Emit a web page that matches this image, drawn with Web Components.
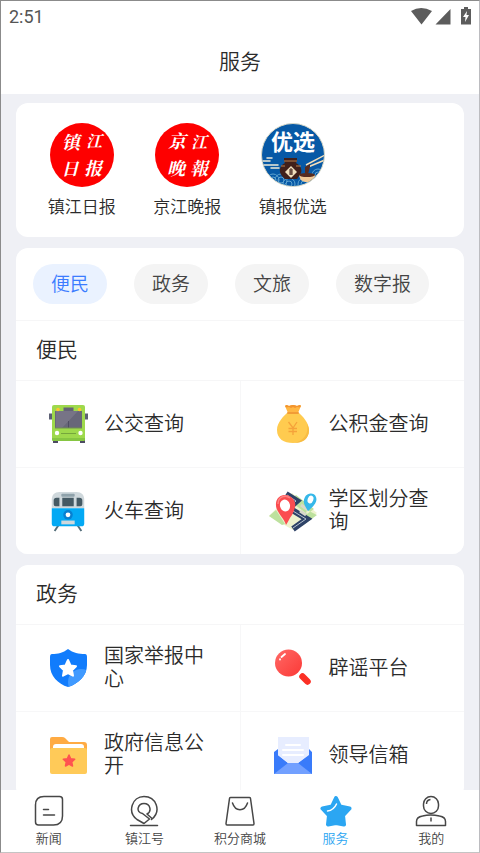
<!DOCTYPE html>
<html lang="zh-CN">
<head>
<meta charset="utf-8">
<meta name="viewport" content="width=device-width, initial-scale=1">
<title>服务</title>
<style>
  body {
    margin: 0;
    color: #2b2b2b;
    font-family: Roboto, "Noto Sans CJK SC", sans-serif;
  }
</style>
</head>
<body>
<service-app>
  <status-bar slot="top" time="2:51"></status-bar>
  <page-title slot="top">服务</page-title>

  <app-card>
    <paper-list>
      <paper-link icon="zjrb">镇江日报</paper-link>
      <paper-link icon="jjwb">京江晚报</paper-link>
      <paper-link icon="zbyx">镇报优选</paper-link>
    </paper-list>
  </app-card>

  <app-card>
    <pill-tabs>
      <pill-tab active>便民</pill-tab>
      <pill-tab>政务</pill-tab>
      <pill-tab>文旅</pill-tab>
      <pill-tab>数字报</pill-tab>
    </pill-tabs>
    <service-group heading="便民">
      <service-item icon="bus">公交查询</service-item>
      <service-item icon="fund">公积金查询</service-item>
      <service-item icon="train">火车查询</service-item>
      <service-item icon="map">学区划分查询</service-item>
    </service-group>
  </app-card>

  <app-card>
    <service-group heading="政务">
      <service-item icon="shield">国家举报中心</service-item>
      <service-item icon="magnifier">辟谣平台</service-item>
      <service-item icon="folder">政府信息公开</service-item>
      <service-item icon="mail">领导信箱</service-item>
    </service-group>
  </app-card>

  <nav-bar slot="bottom">
    <nav-item icon="news">新闻</nav-item>
    <nav-item icon="account">镇江号</nav-item>
    <nav-item icon="shop">积分商城</nav-item>
    <nav-item icon="service" active>服务</nav-item>
    <nav-item icon="me">我的</nav-item>
  </nav-bar>
</service-app>

<script>
const icons = {
  zjrb: `<svg viewBox="0 0 64 64"><circle cx="32" cy="32" r="32" fill="#fe0000"/>
    <g fill="#fff" font-family="Noto Serif CJK SC, Noto Sans CJK SC, sans-serif" font-weight="700" font-style="italic" text-anchor="middle">
    <text x="21" y="26" font-size="18">镇</text><text x="44" y="24" font-size="16">江</text>
    <text x="20" y="52" font-size="17">日</text><text x="43" y="52" font-size="18">报</text></g></svg>`,
  jjwb: `<svg viewBox="0 0 64 64"><circle cx="32" cy="32" r="32" fill="#fe0000"/>
    <g fill="#fff" font-family="Noto Serif CJK SC, Noto Sans CJK SC, sans-serif" font-weight="700" font-style="italic" text-anchor="middle">
    <text x="22" y="25" font-size="18">京</text><text x="44" y="25" font-size="16">江</text>
    <text x="21" y="52" font-size="18">晚</text><text x="44" y="52" font-size="18">報</text></g></svg>`,
  zbyx: `<svg viewBox="0 0 64 64">
    <defs><clipPath id="c"><circle cx="32" cy="32" r="31"/></clipPath></defs>
    <circle cx="32" cy="32" r="31.5" fill="#0759a6" stroke="#d8d8c8"/>
    <g clip-path="url(#c)">
      <g fill="none" stroke="#5fa3cf" stroke-width="1">
        <circle cx="12" cy="57" r="3"/><circle cx="12" cy="57" r="6"/><circle cx="20" cy="57" r="3"/><circle cx="20" cy="57" r="6"/>
        <circle cx="28" cy="61" r="3"/><circle cx="28" cy="61" r="6"/><circle cx="57" cy="52" r="3"/><circle cx="57" cy="52" r="6"/>
        <circle cx="43" cy="61" r="3"/><circle cx="43" cy="61" r="6"/>
      </g>
      <path d="M0 38H9M3 42H17M6 35H11M10 45H18" stroke="#f0ead9" stroke-width="1.500" stroke-linecap="round"/>
      <path d="M23 35h13v3l-1 2c6 3 7 9 3 13l-2 3H24l-3-3c-4-5-2-11 3-13l-1-2z" fill="#41201a"/>
      <path d="M23 38h13M20 43h4m11 0h5" stroke="#b98150" stroke-width="1"/>
      <path d="M30 43l6 6-6 6-6-6z" fill="#f1dfbd"/>
      <path d="M28 47h4M30 45v7M28 51h4M28 49h4" stroke="#41201a" stroke-width="1"/>
      <path d="M38 52h16c0 5-3 7-8 7s-7-2-8-7z" fill="#f0c997"/>
      <ellipse cx="46" cy="52" rx="8" ry="2" fill="#572c20"/>
      <path d="M45 42L64 32M47 44L64 37" stroke="#f5dfb9" stroke-width="1.500" fill="none"/>
      <path d="M44 51v-7l5-3v3l-2 7z" fill="#572c20"/>
    </g>
    <text x="32" y="27" fill="#fff" font-family="Noto Sans CJK SC, sans-serif" font-weight="700" font-size="22" text-anchor="middle">优选</text></svg>`,
  bus: `<svg viewBox="0 0 40 40">
    <path d="M1 9.500h4v6H1zM36 9.500h4v6h-4z" fill="#5c6074"/><path d="M5 35h5v4H5zM32 35h5v4h-5z" fill="#4c4b62"/>
    <rect x="4" y="1" width="33" height="36" rx="2" fill="#9ed94c"/><path d="M4 34h33v1.500a1.500 1.500 0 0 1-1.500 1.500h-30A1.500 1.500 0 0 1 4 35.500z" fill="#86c642"/>
    <rect x="15.500" y="3.500" width="10" height="4" fill="#646376"/><path d="M7 7h27v17H7z" fill="#686779"/>
    <path d="M8 7h22L14 24H8z" fill="#7d7b8b" opacity=".7"/><path d="M20.500 17v7" stroke="#4f4c62"/><path d="M7 24h27" stroke="#718e53"/>
    <circle cx="10" cy="5.500" r="1.800" fill="#ffc52f"/><circle cx="31.500" cy="5.500" r="1.800" fill="#ffc52f"/>
    <circle cx="9" cy="29" r="2.200" fill="#fff"/><circle cx="32.500" cy="29" r="2.200" fill="#fff"/><path d="M13 29.500h15" stroke="#75a63c"/></svg>`,
  fund: `<svg viewBox="0 0 40 40">
    <path d="M14 9c-3 3-10 9-10 17 0 9 7 13 16 13s16-4 16-13c0-8-7-14-10-17z" fill="#ffcb4f"/>
    <path d="M34 20c2 9-3 17-13 19 9 0 15-4 15-13 0-2-1-4-2-6z" fill="#f8bc43"/>
    <path d="M12 2c2-2 3 0 4 0 2-1 3-1 4-1s2 0 4 1c1 0 3-2 4 0l-3 7H15z" fill="#ffb743"/>
    <path d="M12 2c2-2 3 0 4 0 2-1 3-1 4-1s2 0 4 1c1 0 3-2 4 0l-1 1.500-3-.500-2 1-2-1-2 1-2-1-3 .500z" fill="#f3942f"/>
    <rect x="14" y="8" width="12" height="2" rx="1" fill="#f29c36"/>
    <path d="M15.500 18l4.500 6 4-6M20 24v7M15.500 24.500h8.500M15.500 27.500h8.500" stroke="#f5a23a" stroke-width="1.300" fill="none"/></svg>`,
  train: `<svg viewBox="0 0 40 44">
    <path d="M10 37l-4 6M30 37l4 6" stroke="#546e7a" stroke-width="2"/>
    <path d="M3 19v-9c0-5 3-8 8-8h18c5 0 8 3 8 8v9z" fill="#cfd8dc"/>
    <path d="M3 19h34v16c0 2-1 3-3 3H6c-2 0-3-1-3-3z" fill="#03a9f4"/>
    <rect x="13" y="4" width="14" height="3" rx="1" fill="#8fa2ab"/>
    <path d="M5 11q0-3 3-3h3v9H7q-2 0-2-2zM14 8h12v9H14zM29 8h3q3 0 3 3v4q0 2-2 2h-4z" fill="#455a64"/>
    <circle cx="20" cy="26" r="5" fill="#087fd0"/><circle cx="20" cy="26" r="2.500" fill="#fff"/><rect x="13" y="32" width="14" height="4" fill="#cfd8dc"/></svg>`,
  map: `<svg viewBox="0 0 48 40">
    <path d="M0 25l23-23 25 20-24 17z" fill="#eef3ce"/><path d="M0 25l7-6 9 14-3 1zM27 4l18 14-7 5-17-13zM33 35l15-11-10-5z" fill="#bde19e"/>
    <path d="M17 3l11 7-8 7 18 11-14 10" fill="none" stroke="#2e4267" stroke-width="6"/>
    <path d="M18 4l9 6-8 7 18 11-13 9" fill="none" stroke="#b9c5d0" stroke-width="1"/>
    <path d="M31 20l6 4M32 14l7 5" stroke="#d8d8cb" stroke-width="3"/>
    <path d="M39 20c-3-5-6-9-3-14 2-4 9-5 11 0 2 5-3 10-8 14z" fill="#36b8e9"/><ellipse cx="41.500" cy="8.500" rx="2.800" ry="4" transform="rotate(20 41.500 8.500)" fill="#fff"/>
    <path d="M17 34C15 26 6 21 7 12 8 4 17 2 22 6c7 5 4 12 1 18-3 4-4 7-6 10z" fill="#fb4d50"/>
    <path d="M9 13c0-7 7-10 12-6" stroke="#ff8182" stroke-width="1.500" fill="none"/><ellipse cx="16" cy="14.500" rx="5" ry="6" transform="rotate(-15 16 14.500)" fill="#fff"/></svg>`,
  shield: `<svg viewBox="0 0 40 40">
    <defs><clipPath id="s"><path d="M20 1c5 4 11 5 17 5q2 0 2 3v8c0 11-9 19-19 22C10 36 2 28 2 17V9q0-3 2-3c6 0 11-1 16-5z"/></clipPath></defs>
    <g clip-path="url(#s)"><path d="M0 0h40v40H0z" fill="#117cfc"/><circle cx="33" cy="34" r="13" fill="#409aff"/></g>
    <path d="M20 12l2.500 5.500 5.500.700-4 4 1 5.500-5-2.700-5 2.700 1-5.500-4-4 5.500-.700z" fill="#fff" stroke="#fff" stroke-width="2" stroke-linejoin="round"/></svg>`,
  magnifier: `<svg viewBox="0 0 40 40">
    <defs><linearGradient id="m" x2="1" y2="1"><stop stop-color="#ff6966"/><stop offset="1" stop-color="#fb3936"/></linearGradient></defs>
    <circle cx="15.500" cy="15" r="13.500" fill="url(#m)"/><path d="M29.500 28.500l5 5" stroke="#fb3026" stroke-width="6.500" stroke-linecap="round"/>
    <path d="M8.500 9l3.500-3M7 11.500v-.300" stroke="#fff" stroke-width="1.800" stroke-linecap="round"/></svg>`,
  folder: `<svg viewBox="0 0 40 40">
    <path d="M2 4q0-2 2-2h10q2 0 3 1l4 4h15q3 0 3 3v10H2z" fill="#ffab43"/>
    <path d="M5 18v-6q0-3 3-3h25q3 0 3 3v6z" fill="#fff"/>
    <path d="M4 13h33q2 0 2 2v22q0 2-2 2H4q-2 0-2-2V15q0-2 2-2z" fill="#ffca58"/>
    <path d="M21 20l1.700 3.700 4 .500-3 2.800.800 4-3.500-2-3.500 2 .800-4-3-2.800 4-.500z" fill="#ff5350" stroke="#ff5350" stroke-width="1.500" stroke-linejoin="round"/></svg>`,
  mail: `<svg viewBox="0 0 40 40">
    <path d="M1 17l4-3v14h31V14l3 3v22H1z" fill="#397bfa"/><path d="M5 2h31v22L24 29h-7L5 21z" fill="#e7edff"/>
    <path d="M1 17l14 11h10l14-11v22H1z" fill="#397bfa"/><path d="M1 39l14-11h10l14 11z" fill="#72a0ff"/>
    <path d="M5 20l10 8h10l11-8v-3H5z" fill="#e7edff"/>
    <path d="M13 10h14M10 15h20M10 20h20" stroke="#fff" stroke-width="2" stroke-linecap="round"/></svg>`,
  news: `<svg viewBox="0 0 32 32" fill="none" stroke="#474747" stroke-width="1.500" stroke-linecap="round">
    <path d="M11 1.500h15.500q3 0 3 3V21q0 9-9 9H5.500q-3 0-3-3V10q0-8.500 8.500-8.500z"/><path d="M10.500 14.500h5M10.500 20h11"/></svg>`,
  account: `<svg viewBox="0 0 32 32" fill="none" stroke="#474747" stroke-width="1.500" stroke-linejoin="round" stroke-linecap="round">
    <path d="M23.500 24.500C34 16 28 1.500 16 1.500S-1 17 9 24.500l7 4 5.500-4.500-7-5.500C7 17 10 8.500 16 8.500c6.500 0 8 8 3 10.500l4.500 4"/><path d="M2.500 30.500h27"/></svg>`,
  shop: `<svg viewBox="0 0 32 32" fill="none" stroke="#474747" stroke-width="1.500" stroke-linecap="round" stroke-linejoin="round">
    <path d="M6.500 2.500h19q1 0 1 1l3.500 25q0 1.500-1 1.500H3q-1 0-1-1.500l3.500-25q0-1 1-1z"/><path d="M8.500 8c3 9 12 9 15 0"/></svg>`,
  service: `<svg viewBox="0 0 32 32">
    <path d="M16 3l4 8.500 9.500 2-6.500 7 1 9-8-1.500-8 1.500 1-9-6.500-7 9.500-2z" fill="#2ba6f2" stroke="#2ba6f2" stroke-width="4" stroke-linejoin="round"/>
    <path d="M7.500 16c4-.500 7-2.500 9-7" stroke="#fff" stroke-width="1.500" stroke-linecap="round" fill="none"/></svg>`,
  me: `<svg viewBox="0 0 32 32" fill="none" stroke="#474747" stroke-width="1.500" stroke-linejoin="round">
    <rect x="8.500" y="1.500" width="15" height="17" rx="7.500"/><path d="M11.500 9q0-4 4-4.500M1.500 30.500v-4q0-4.500 6-5.500 8-2 17 0 6 1 6 5.500v4zM16 22.500v4"/></svg>`
};

function define(name, html, setup) {
  const tmpl = document.createElement("template");
  tmpl.innerHTML = html;

  customElements.define(name, class extends HTMLElement {
    constructor() {
      super();
      this.attachShadow({ mode: "open" });
      this.shadowRoot.appendChild(tmpl.content.cloneNode(true));
    }

    connectedCallback() {
      if (setup) setup(this, this.shadowRoot);
    }
  });
}

function addIcon(el, root) {
  root.querySelector(".icon").innerHTML = icons[el.getAttribute("icon")];
}

define("service-app", `
  <style>
    :host {
      display: flex;
      flex-direction: column;
      box-sizing: border-box;
      height: 100vh;
      border: 1px solid #8b8b8b;
      border-right-color: #bcbcc0;
      border-bottom-color: #c4c4c4;
      background: #eff0f5;
    }
    main {
      display: flex;
      flex: 1;
      flex-direction: column;
      gap: 11px;
      min-height: 0;
      padding: 9px 15px 10px;
      overflow-y: auto;
      scrollbar-width: none;
    }
  </style>
  <header><slot name="top"></slot></header>
  <main><slot></slot></main>
  <slot name="bottom"></slot>
`);

define("status-bar", `
  <style>
    :host {
      display: flex;
      align-items: center;
      justify-content: space-between;
      height: 30px;
      padding: 0 8px;
      background: #fff;
      color: #555;
      font-size: 18px;
    }
    svg { display: block; width: 60px; height: 18px; }
  </style>
  <span></span>
  <svg viewBox="0 0 60 18" fill="#5c5c5c" aria-hidden="true">
    <path d="M0 4Q10-2 21 4L10.500 17.500zM24.500 17.500L39.500 2v15.500zM50 2h3V0h4v2h3v15.500H50z"/>
    <path d="M56 4l-4 6h2.500L54 15l4-7h-2.500z" fill="#fff"/>
  </svg>
`, (el, root) => {
  root.querySelector("span").textContent = el.getAttribute("time");
});

define("page-title", `
  <style>
    :host { display: block; background: #fff; }
    h1 {
      margin: 0;
      font-size: 21px;
      font-weight: 350;
      line-height: 63px;
      text-align: center;
    }
  </style>
  <h1><slot></slot></h1>
`);

define("app-card", `
  <style>
    :host {
      display: block;
      flex: none;
      border-radius: 12px;
      background: #fff;
      overflow: hidden;
    }
  </style>
  <slot></slot>
`);

define("paper-list", `
  <style>
    :host {
      display: grid;
      grid-template-columns: repeat(4, 1fr);
      padding: 20px 13px 18px;
    }
  </style>
  <slot></slot>
`);

define("paper-link", `
  <style>
    a {
      display: flex;
      flex-direction: column;
      align-items: center;
      gap: 8px;
      color: inherit;
      font-size: 17px;
      font-weight: 350;
      line-height: 24px;
      text-decoration: none;
    }
    svg { display: block; width: 64px; height: 64px; }
  </style>
  <a href="#"><span class="icon"></span><slot></slot></a>
`, addIcon);

define("pill-tabs", `
  <style>
    :host {
      display: flex;
      gap: 27px;
      padding: 16px 17px;
      border-bottom: 1px solid #f6f6f7;
    }
  </style>
  <slot></slot>
`);

define("pill-tab", `
  <style>
    button {
      display: block;
      height: 40px;
      padding: 0 18px 3px;
      border: 0;
      border-radius: 20px;
      background: #f4f4f4;
      color: #444;
      font: inherit;
      font-size: 19px;
      font-weight: 350;
    }
    :host([active]) button { background: #eaf2ff; color: #3b7cff; }
  </style>
  <button type="button"><slot></slot></button>
`);

define("service-group", `
  <style>
    h2 {
      margin: 0;
      padding-left: 20px;
      border-bottom: 1px solid #f6f6f7;
      font-size: 21px;
      font-weight: 350;
      line-height: 59px;
    }
    div {
      display: grid;
      grid-template-columns: 1fr 1fr;
      gap: 1px;
      background: #f7f7f8;
    }
  </style>
  <section>
    <h2></h2>
    <div><slot></slot></div>
  </section>
`, (el, root) => {
  root.querySelector("h2").textContent = el.getAttribute("heading");
});

define("service-item", `
  <style>
    :host { display: block; background: #fff; }
    a {
      display: flex;
      align-items: center;
      gap: 16px;
      height: 86px;
      padding: 0 30px 0 32px;
      color: inherit;
      font-size: 20px;
      font-weight: 350;
      line-height: 23px;
      text-decoration: none;
    }
    .icon { flex: none; width: 40px; }
    svg { display: block; width: 40px; height: 42px; }
    .icon.wide svg { width: 48px; margin: 0 -4px; }
  </style>
  <a href="#"><span class="icon"></span><span><slot></slot></span></a>
`, (el, root) => {
  addIcon(el, root);
  root.querySelector(".icon").classList.toggle("wide", el.getAttribute("icon") === "map");
});

define("nav-bar", `
  <style>
    :host { display: block; background: #fff; }
    nav { display: grid; grid-template-columns: repeat(5, 1fr); }
  </style>
  <nav><slot></slot></nav>
`);

define("nav-item", `
  <style>
    a {
      display: flex;
      flex-direction: column;
      align-items: center;
      gap: 2px;
      padding: 5px 0 4px;
      color: #444;
      font-size: 13px;
      font-weight: 350;
      line-height: 19px;
      text-decoration: none;
    }
    :host([active]) a { color: #2ba6f2; }
    svg { display: block; width: 32px; height: 32px; }
  </style>
  <a href="#"><span class="icon"></span><slot></slot></a>
`, addIcon);
</script>
</body>
</html>
